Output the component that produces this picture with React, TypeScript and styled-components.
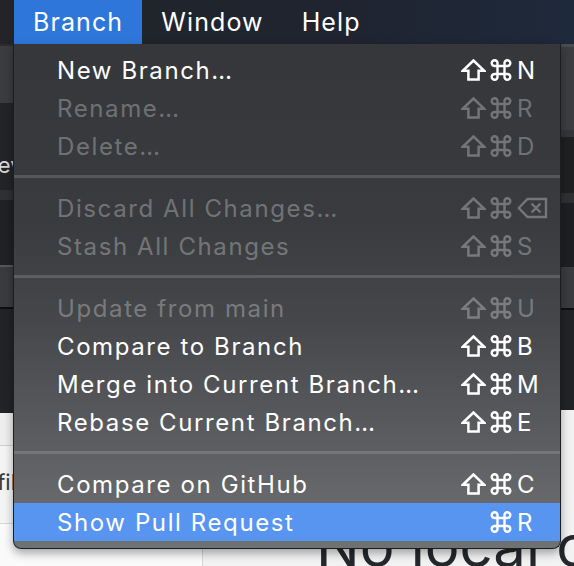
import styled, { createGlobalStyle } from 'styled-components';

const GlobalStyle = createGlobalStyle`
    html, body {
        margin: 0;
        padding: 0;
        background: #222326;
    }
    * {
        box-sizing: border-box;
    }
`;

type Item = {
    label: string;
    keys: string[];
    disabled?: boolean;
    active?: boolean;
};

const groups: Item[][] = [
    [
        { label: 'New Branch…', keys: ['shift', 'cmd', 'N'] },
        { label: 'Rename…', keys: ['shift', 'cmd', 'R'], disabled: true },
        { label: 'Delete…', keys: ['shift', 'cmd', 'D'], disabled: true },
    ],
    [
        { label: 'Discard All Changes…', keys: ['shift', 'cmd', 'del'], disabled: true },
        { label: 'Stash All Changes', keys: ['shift', 'cmd', 'S'], disabled: true },
    ],
    [
        { label: 'Update from main', keys: ['shift', 'cmd', 'U'], disabled: true },
        { label: 'Compare to Branch', keys: ['shift', 'cmd', 'B'] },
        { label: 'Merge into Current Branch…', keys: ['shift', 'cmd', 'M'] },
        { label: 'Rebase Current Branch…', keys: ['shift', 'cmd', 'E'] },
    ],
    [
        { label: 'Compare on GitHub', keys: ['shift', 'cmd', 'C'] },
        { label: 'Show Pull Request', keys: ['cmd', 'R'], active: true },
    ],
];

function ShiftIcon() {
    return (
        <svg width="25" height="22" viewBox="0 0 25 22" fill="none">
            <path d="M12.5 1.5 L1.8 11.8 H7.4 V20.6 H17.6 V11.8 H23.2 Z"
                stroke="currentColor" strokeWidth="2.5" strokeLinejoin="miter" />
        </svg>
    );
}

function CmdIcon() {
    return (
        <svg width="24" height="22" viewBox="0 0 24 22" fill="none">
            <path d="M8.5 7 V15 M15.5 7 V15 M8.5 7 H15.5 M8.5 15 H15.5
                M8.5 7 H5.8 A2.9 2.9 0 1 1 8.5 4.3 Z
                M15.5 7 V4.3 A2.9 2.9 0 1 1 18.2 7 Z
                M8.5 15 V17.7 A2.9 2.9 0 1 1 5.8 15 Z
                M15.5 15 H18.2 A2.9 2.9 0 1 1 15.5 17.7 Z"
                stroke="currentColor" strokeWidth="2.4" strokeLinejoin="round" />
        </svg>
    );
}

function DeleteIcon() {
    return (
        <svg width="31" height="22" viewBox="0 0 31 22" fill="none">
            <path d="M1.8 11 L10.5 2 H29 V20 H10.5 Z"
                stroke="currentColor" strokeWidth="2.4" strokeLinejoin="miter" />
            <path d="M14.5 6.5 L23.5 15.5 M23.5 6.5 L14.5 15.5"
                stroke="currentColor" strokeWidth="2.4" />
        </svg>
    );
}

function Shortcut({ keys }: { keys: string[] }) {
    const last = keys[keys.length - 1];
    return (
        <Keys>
            <KeySlot>{keys.includes('shift') && <ShiftIcon />}</KeySlot>
            <KeySlot><CmdIcon /></KeySlot>
            <LetterSlot>{last === 'del' ? <DeleteIcon /> : last}</LetterSlot>
        </Keys>
    );
}

export default function App(): JSX.Element {
    return (
        <>
            <GlobalStyle />
            <Screen>
                <MenuBar>
                    <MenuTitle $open>Branch</MenuTitle>
                    <MenuTitle>Window</MenuTitle>
                    <MenuTitle>Help</MenuTitle>
                </MenuBar>
                <Window>
                    <LeftPane>
                        <Band $h={2} $bg="#2a2c2e" />
                        <Band $h={57} $bg="#3a3c3f" />
                        <Band $h={87} $bg="#232427">
                            <SideText $color="#d8d9db" $shift={-16} $bottom={12}>Review</SideText>
                        </Band>
                        <Band $h={10} $bg="#2e3033" />
                        <Band $h={65} $bg="#202124" />
                        <Band $h={2} $bg="#55575a" />
                        <Band $h={40} $bg="#3a3b3e" />
                        <Band $h={2} $bg="#0e0e0f" />
                        <Band $h={104} $bg="#222326" />
                        <Band $h={32} $bg="#eeeeee" />
                        <Band $h={1} $bg="#d0d0d0" />
                        <Band $h={77} $bg="#f4f4f4">
                            <SideText $color="#3a3a3a" $shift={-38} $bottom={28}>Profile</SideText>
                        </Band>
                        <Band $h={1} $bg="#d8d8d8" />
                        <Band $h={60} $bg="#fafafa" />
                    </LeftPane>
                    <RightPane>
                        <Band $h={3} $bg="#4a4c4f" />
                        <Band $h={83} $bg="#3b3d40" />
                        <Band $h={7} $bg="#333538" />
                        <Band $h={56} $bg="#1f2022" />
                        <Band $h={10} $bg="#2e3032" />
                        <Band $h={64} $bg="#1e1f22" />
                        <Band $h={41} $bg="#3a3b3e" />
                        <Band $h={2} $bg="#0e0e0f" />
                        <Band $h={100} $bg="#222326" />
                        <EmptyState>
                            <BigText>No local changes</BigText>
                        </EmptyState>
                    </RightPane>
                </Window>

                <Dropdown>
                    {groups.map((group, gi) => (
                        <div key={gi}>
                            {gi > 0 && <Separator />}
                            {group.map((item) => (
                                <Row key={item.label} $disabled={item.disabled} $active={item.active}>
                                    <Label>{item.label}</Label>
                                    <Shortcut keys={item.keys} />
                                </Row>
                            ))}
                        </div>
                    ))}
                </Dropdown>
            </Screen>
        </>
    );
}

const Screen = styled.div`
    position: relative;
    width: 574px;
    height: 566px;
    overflow: hidden;
    font-family: "Inter", "Noto Sans", sans-serif;
    display: flex;
    flex-direction: column;
`;

const MenuBar = styled.div`
    height: 44px;
    flex-shrink: 0;
    display: flex;
    align-items: stretch;
    padding-left: 14px;
    background: linear-gradient(90deg, #222428 0%, #1f2430 60%, #1e293b 100%);
`;

const MenuTitle = styled.div<{ $open?: boolean }>`
    display: flex;
    align-items: center;
    padding: 0 19px;
    font-size: 25px;
    letter-spacing: 1.1px;
    color: #ffffff;
    background: ${(p) => (p.$open ? '#2f76da' : 'transparent')};
`;

const Window = styled.div`
    flex: 1;
    display: grid;
    grid-template-columns: 203px 1fr;
    overflow: hidden;
`;

const LeftPane = styled.div`
    display: flex;
    flex-direction: column;
    border-right: 1px solid #d6d6d6;
    overflow: hidden;
`;

const RightPane = styled.div`
    display: flex;
    flex-direction: column;
`;

const Band = styled.div<{ $h: number; $bg: string }>`
    height: ${(p) => p.$h}px;
    flex-shrink: 0;
    background: ${(p) => p.$bg};
    display: flex;
    align-items: flex-end;
    overflow: hidden;
`;

const SideText = styled.span<{ $color: string; $shift: number; $bottom: number }>`
    font-size: 22px;
    color: ${(p) => p.$color};
    margin-bottom: ${(p) => p.$bottom}px;
    margin-left: ${(p) => p.$shift}px;
    white-space: nowrap;
`;

const EmptyState = styled.div`
    flex: 1;
    background: #f2f2f2;
    display: flex;
    align-items: flex-end;
    padding-left: 113px;
`;

const BigText = styled.div`
    font-size: 58px;
    line-height: 1;
    color: #24272b;
    white-space: nowrap;
    margin-bottom: -9px;
`;

const Dropdown = styled.div`
    position: absolute;
    left: 13px;
    top: 44px;
    width: 548px;
    padding: 7px 0 7px;
    background: linear-gradient(180deg, #35373a 0%, #393b3e 35%, #45474a 55%, #5b5c5f 78%, #707173 100%);
    border: 1px solid #1c1d1f;
    border-top: none;
    border-radius: 0 0 8px 8px;
    box-shadow: 0 4px 10px rgba(0, 0, 0, 0.35);
`;

const Separator = styled.div`
    height: 3px;
    margin: 10px 0 11px;
    background: rgba(255, 255, 255, 0.15);
`;

const Row = styled.div<{ $disabled?: boolean; $active?: boolean }>`
    height: 38px;
    display: flex;
    align-items: center;
    padding-left: 43px;
    padding-right: 8px;
    font-size: 24px;
    letter-spacing: 1.6px;
    color: ${(p) => (p.$disabled ? 'rgba(255, 255, 255, 0.3)' : '#ffffff')};
    background: ${(p) => (p.$active ? '#5795f1' : 'transparent')};
`;

const Label = styled.span`
    flex: 1;
    white-space: nowrap;
`;

const Keys = styled.div`
    display: flex;
    align-items: center;
`;

const KeySlot = styled.span`
    width: 28px;
    height: 22px;
    display: flex;
    align-items: center;
`;

const LetterSlot = styled.span`
    width: 35px;
    display: flex;
    align-items: center;
    letter-spacing: 0;
`;
